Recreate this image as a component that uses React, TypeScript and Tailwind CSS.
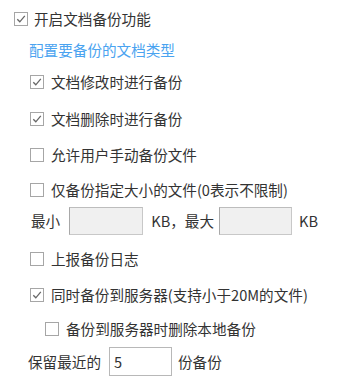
import React from "react";

const font = { fontFamily: '"Microsoft YaHei", "Noto Sans CJK SC", "Noto Sans", sans-serif' };

function Box({ checked }: { checked?: boolean }) {
  return (
    <span className="w-[14px] h-[14px] border border-[#a6a6a6] bg-white flex items-center justify-center shrink-0">
      {checked && (
        <svg width="10" height="10" viewBox="0 0 10 10">
          <path d="M1.3 5.2 L3.8 7.8 L8.8 1.8" fill="none" stroke="#666666" strokeWidth="1.3" />
        </svg>
      )}
    </span>
  );
}

function Row({ checked, label, indent, mt }: { checked?: boolean; label: string; indent: string; mt: string }) {
  return (
    <div className={`flex items-center h-[20px] ${indent} ${mt}`}>
      <Box checked={checked} />
      <span className="ml-[7px] whitespace-nowrap">{label}</span>
    </div>
  );
}

export default function App() {
  return (
    <div className="w-[338px] h-[388px] bg-white text-[#333333] text-[14.6px] leading-[20px] overflow-hidden" style={font}>
      <div className="flex flex-col pt-[9px]">
        <div className="flex items-center h-[20px] pl-[14px]">
          <Box checked />
          <span className="ml-[6px] whitespace-nowrap">开启文档备份功能</span>
        </div>
        <div className="h-[20px] mt-[11px] pl-[29px] text-[#4aa3f0] whitespace-nowrap">配置要备份的文档类型</div>
        <Row checked label="文档修改时进行备份" indent="pl-[30px]" mt="mt-[12px]" />
        <Row checked label="文档删除时进行备份" indent="pl-[30px]" mt="mt-[17px]" />
        <Row label="允许用户手动备份文件" indent="pl-[30px]" mt="mt-[16px]" />
        <Row label="仅备份指定大小的文件(0表示不限制)" indent="pl-[30px]" mt="mt-[15px]" />
        <div className="flex items-center h-[28px] mt-[7px] pl-[31px]">
          <span className="whitespace-nowrap">最小</span>
          <div className="ml-[9px] w-[74px] h-[28px] border border-[#c8c8c8] border-l-[#a8a8a8] border-t-[#bdbdbd] bg-[#f0f0f0]" />
          <span className="ml-[8px] whitespace-nowrap">KB，最大</span>
          <div className="ml-[5px] w-[73px] h-[28px] border border-[#c8c8c8] border-l-[#a8a8a8] border-t-[#bdbdbd] bg-[#f0f0f0]" />
          <span className="ml-[7px] whitespace-nowrap">KB</span>
        </div>
        <Row label="上报备份日志" indent="pl-[30px]" mt="mt-[14px]" />
        <Row checked label="同时备份到服务器(支持小于20M的文件)" indent="pl-[30px]" mt="mt-[16px]" />
        <Row label="备份到服务器时删除本地备份" indent="pl-[45px]" mt="mt-[14px]" />
        <div className="flex items-center h-[29px] mt-[8px] pl-[28px]">
          <span className="whitespace-nowrap">保留最近的</span>
          <div className="ml-[8px] w-[63px] h-[29px] border border-[#b8b8b8] bg-white flex items-center pl-[4px]">5</div>
          <span className="ml-[6px] whitespace-nowrap">份备份</span>
        </div>
      </div>
    </div>
  );
}
